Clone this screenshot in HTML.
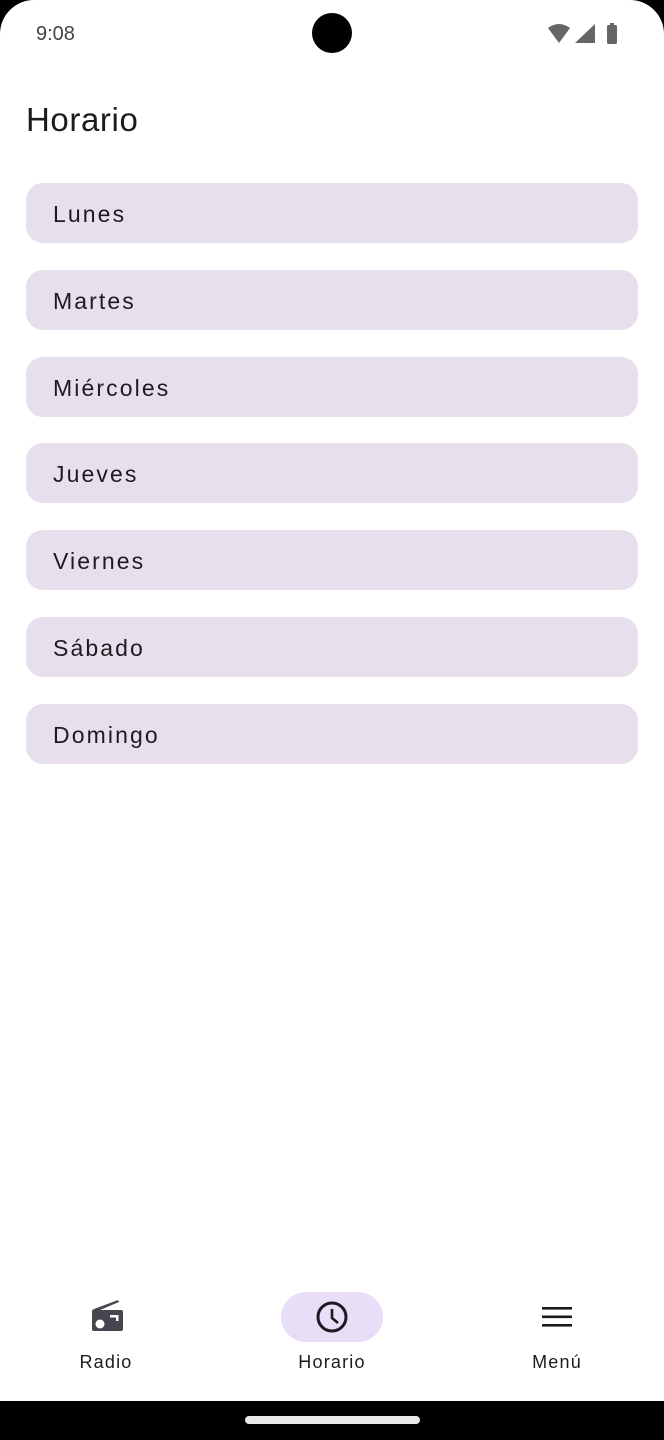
<!DOCTYPE html>
<html><head><meta charset="utf-8"><style>
*{margin:0;padding:0;box-sizing:border-box}
body{width:664px;height:1440px;background:#000;font-family:"Liberation Sans",sans-serif;position:relative;overflow:hidden}
.screen{position:absolute;left:0;top:0;width:664px;height:1401px;background:#fff;border-radius:34px 34px 0 0}
.time{position:absolute;left:36px;top:23px;font-size:20px;color:#444}
.cam{position:absolute;left:312px;top:13px;width:40px;height:40px;border-radius:50%;background:#000}
h1{position:absolute;left:26px;top:101px;font-size:33px;font-weight:normal;color:#1d1b20;letter-spacing:.6px}
.card{position:absolute;left:26px;width:612px;height:60px;border-radius:17px;background:#e7dfeb;color:#1d1b20;font-size:23px;letter-spacing:2.1px;padding-left:27px;line-height:62px}
.nav{position:absolute;top:1292px;width:102px;height:50px;border-radius:25px}
.lbl{position:absolute;top:1352px;font-size:18px;color:#1d1b20;letter-spacing:1.2px;width:120px;text-align:center}
.bar{position:absolute;left:245px;top:1416px;width:175px;height:8px;border-radius:4px;background:#e8e8e8}
</style></head><body>
<div class="screen">
<div class="time">9:08</div>
<div class="cam"></div>
<svg style="position:absolute;left:546px;top:22px" width="76" height="24" viewBox="0 0 76 24">
<path d="M2 6 Q13 -2 24 6 L13 21 Z" fill="#666"/>
<path d="M29 21 L49 2 L49 21 Z" fill="#666"/>
<rect x="61" y="3" width="10" height="19" rx="1.5" fill="#666"/><rect x="64" y="1" width="4" height="3" fill="#666"/>
</svg>
<h1>Horario</h1>
<div class="card" style="top:183px">Lunes</div>
<div class="card" style="top:270px">Martes</div>
<div class="card" style="top:357px">Miércoles</div>
<div class="card" style="top:443px">Jueves</div>
<div class="card" style="top:530px">Viernes</div>
<div class="card" style="top:617px">Sábado</div>
<div class="card" style="top:704px">Domingo</div>

<svg style="position:absolute;left:88px;top:1299px" width="36" height="36" viewBox="0 0 36 36">
<path d="M4 12 L4 30 Q4 32 6 32 L33 32 Q35 32 35 30 L35 13 Q35 11 33 11 L12 11 L31 3 L30 1 L6 10 Q4 11 4 12 Z" fill="#48454e"/>
<circle cx="12" cy="25" r="4.5" fill="#fff"/>
<rect x="22" y="16" width="8" height="2.5" fill="#fff"/><rect x="28" y="16" width="2.5" height="6" fill="#fff"/>
</svg>
<div class="nav" style="left:281px;background:#e8def8"></div>
<svg style="position:absolute;left:314px;top:1299px" width="36" height="36" viewBox="0 0 36 36">
<circle cx="18" cy="18" r="14" fill="none" stroke="#1d1b20" stroke-width="3"/>
<path d="M18 10 L18 19 L24 24" fill="none" stroke="#1d1b20" stroke-width="2.6"/>
</svg>
<svg style="position:absolute;left:540px;top:1304px" width="34" height="26" viewBox="0 0 34 26">
<rect x="2" y="3" width="30" height="2.6" fill="#1d1b20"/><rect x="2" y="11.5" width="30" height="2.6" fill="#1d1b20"/><rect x="2" y="20" width="30" height="2.6" fill="#1d1b20"/>
</svg>
<div class="lbl" style="left:46px">Radio</div>
<div class="lbl" style="left:272px">Horario</div>
<div class="lbl" style="left:497px">Menú</div>
</div>
<div class="bar"></div>
</body></html>
